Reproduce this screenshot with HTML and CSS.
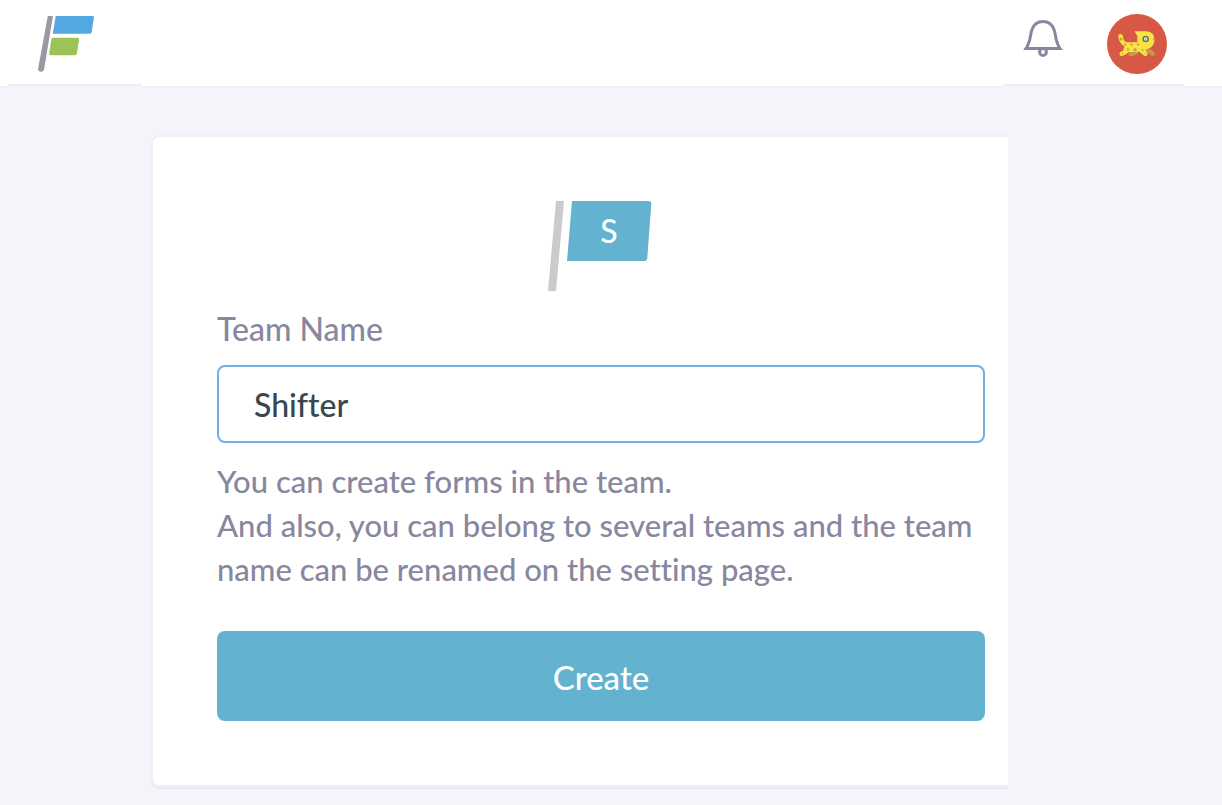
FILE: index.html
```html
<!DOCTYPE html>
<html lang="en">
<head>
<meta charset="utf-8">
<meta name="viewport" content="width=device-width, initial-scale=1">
<title>Create team</title>
<link rel="stylesheet" href="styles.css">
</head>
<body>
<header class="header">
  <div class="header-edge-left"></div>
  <a class="logo" href="#" aria-label="Home">
    <svg width="60" height="60" viewBox="36 14 60 60" aria-hidden="true">
      <path d="M47.8 16H53l-9 53.8q-.6 2-3 2-3.400-.3-2.900-3z" fill="#9a99a1"/>
      <path d="M55.700 16H92.500Q94.200 16 93.900 17.600L91.700 32Q91.400 33.800 89.800 33.800H52.800Z" fill="#52a8df"/>
      <path d="M53.200 37.700H77.500Q79.400 37.700 79.100 39.400L76.900 53.500Q76.600 55.300 74.800 55.300H50.500Q48.900 55.300 49.200 53.500L51.300 39.400Q51.600 37.700 53.200 37.700Z" fill="#9ac455"/>
    </svg>
  </a>
  <div class="header-fill"></div>
  <nav class="tools" aria-label="Account">
    <button class="icon-button bell" type="button" aria-label="Notifications">
      <svg width="40" height="40" viewBox="1023 18 40 40" aria-hidden="true">
        <g fill="none" stroke="#8887a0" stroke-width="3">
          <path d="M1026 48.500C1031 41 1030 34.500 1032 29.500C1034 24 1038 21.500 1043 21.500S1052 24 1054 29.500C1056 34.500 1055 41 1060 48.500Z"/>
          <circle cx="1043" cy="52" r="3.400"/>
        </g>
      </svg>
    </button>
    <button class="icon-button avatar" type="button" aria-label="Profile">
      <svg width="60" height="60" viewBox="1107 14 60 60" aria-hidden="true">
        <circle cx="1137" cy="44" r="30" fill="#d65845"/>
        <path d="M1132 49H1141L1137.500 54Q1134 56.500 1129.500 56Q1127 54 1130 52Z" fill="#c59b43"/>
        <path d="M1145 48Q1151 48.500 1154 52Q1156.500 56 1152.500 56Q1149 53 1144 51Z" fill="#c59b43"/>
        <path d="M1120.500 34Q1123 34 1123.200 38Q1124 42.300 1128 42.200H1137.300V36L1134.500 31.200H1146Q1154.500 31.500 1154.500 40Q1154 46.500 1149 48.500L1145 49.500L1147.500 53Q1148 56.500 1144.500 56L1139 51.500L1137 52H1129L1125.500 54.500Q1120 57.500 1119.500 54Q1119 51.500 1123 51L1124.500 46.500Q1119 43 1118.300 37Q1118.300 34 1120.500 34Z" fill="#fae246"/>
        <g fill="#c0ad3d">
          <circle cx="1121" cy="39" r="1.500"/><circle cx="1125" cy="44.500" r="1.200"/>
          <circle cx="1131.500" cy="44.500" r="1.300"/><circle cx="1138" cy="44.500" r="1.200"/>
          <circle cx="1128" cy="49.500" r="1.200"/><circle cx="1135" cy="49.700" r="1.800"/><circle cx="1142.500" cy="50" r="1.100"/>
          <circle cx="1122.500" cy="53.500" r=".8"/><circle cx="1145.500" cy="53.500" r=".8"/>
        </g>
        <circle cx="1145.700" cy="39" r="2.500" fill="#fff" stroke="#5b8140" stroke-width="1.600"/>
        <circle cx="1145.700" cy="39" r=".7" fill="#5b8140"/>
        <circle cx="1154.300" cy="39.300" r="1.200" fill="#ee7960"/>
      </svg>
    </button>
  </nav>
  <div class="header-edge-right"></div>
</header>
<main class="page">
  <form class="card">
    <div class="team-flag">
      <svg class="flag-shape" width="106" height="90" viewBox="0 0 106 90" aria-hidden="true">
        <path d="M8 0H16L8 90H0Z" fill="#cbcbcd"/>
        <path d="M24 0H100Q103.500 0 103.300 3L99.300 57Q99 60 96 60H19Z" fill="#63b2cf"/>
      </svg>
      <span class="flag-letter">S</span>
    </div>
    <label class="label" for="team-name">Team Name</label>
    <input class="field" id="team-name" type="text" value="Shifter" aria-describedby="team-help">
    <p class="help" id="team-help">You can create forms in the team.<br>And also, you can belong to several teams and the team name can be renamed on the setting page.</p>
    <button class="submit" type="submit">Create</button>
  </form>
</main>
</body>
</html>
```
FILE: styles.css
```css
* {
  box-sizing: border-box;
}

body {
  margin: 0;
  min-height: 100vh;
  background: #f5f4fa;
  color: #8887a0;
  font-family: Lato, "Liberation Sans", sans-serif;
  font-size: 32px;
  font-weight: 500;
  font-variant-ligatures: none;
  line-height: 44px;
}

.header {
  display: grid;
  grid-template-columns: 9px 133px 1fr 179px 39px;
}

.header-edge-left,
.header-fill,
.header-edge-right {
  background: #fff;
  border-bottom: 1px solid #eeedf2;
}

.logo,
.tools {
  display: flex;
  margin-bottom: 1px;
  border-bottom: 2px solid #eeedf3;
  background: #fff;
}

.logo {
  padding: 14px 27px 10px;
}

.tools {
  justify-content: space-between;
  padding: 14px 16px 10px 19px;
}

.icon-button {
  display: block;
  padding: 0;
  border: 0;
  background: none;
}

.icon-button svg,
.logo svg,
.flag-shape {
  display: block;
}

.bell {
  align-self: flex-start;
  padding-top: 4px;
}

.page {
  padding: 48px 214px 16px 151px;
}

.card {
  display: flex;
  flex-direction: column;
  padding: 64px 23px 64px 64px;
  border: 2px solid #efeefc;
  border-right: 0;
  border-radius: 8px 0 0 8px;
  background: #fff;
  box-shadow: 0 2px 0 #e8e8f0;
}

.team-flag {
  display: grid;
  align-self: center;
}

.flag-shape,
.flag-letter {
  grid-area: 1 / 1;
}

.flag-letter {
  padding: 8px 0 0 16px;
  color: #fff;
  text-align: center;
}

.label {
  margin-top: 16px;
}

.field {
  width: 100%;
  height: 78px;
  margin-top: 14px;
  padding: 0 35px;
  border: 2px solid #73afe3;
  border-radius: 8px;
  outline: 0;
  background: #fff;
  color: #37474f;
  font: inherit;
  font-variant-ligatures: none;
}

.help {
  margin: 16px 0 40px;
  font-size: 31px;
}

.submit {
  height: 90px;
  padding: 2px 0 0;
  border: 0;
  border-radius: 8px;
  background: #63b2cf;
  color: #fff;
  font: inherit;
  font-size: 33px;
}
```
